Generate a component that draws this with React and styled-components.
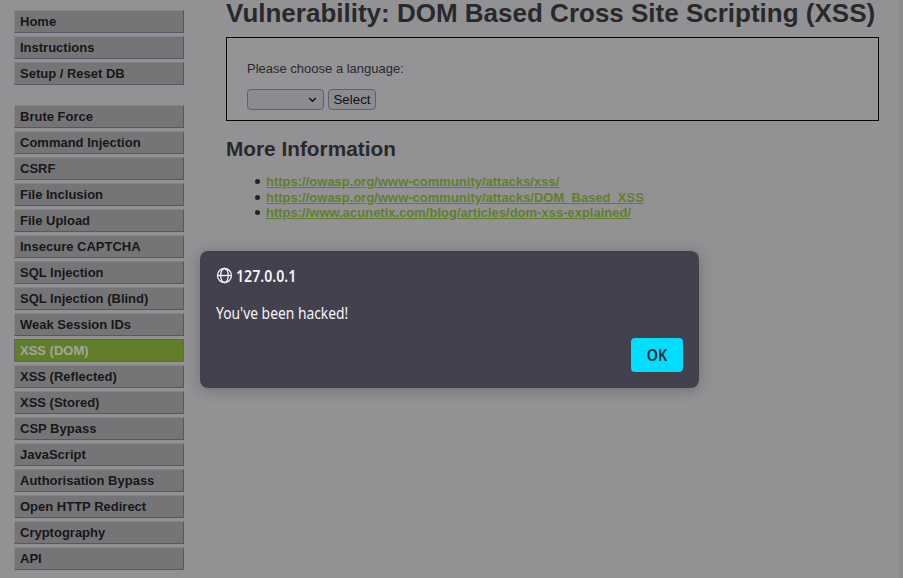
import React from 'react';
import styled, { createGlobalStyle } from 'styled-components';

const GlobalStyle = createGlobalStyle`
  * { box-sizing: border-box; }
  html, body { margin: 0; height: 100%; overflow: hidden; background: #929294; }
`;

const Page = styled.div`
  position: relative;
  display: flex;
  width: 903px;
  height: 578px;
  overflow: hidden;
  background: #929294;
  border-right: 4px solid #8d8d8f;
  color: #29292b;
  font: 13px/15.6px "Liberation Sans", Arial, sans-serif;
`;

const Sidebar = styled.nav`
  display: flex;
  flex-direction: column;
  gap: 20px;
  width: 170px;
  margin: 10px 0 0 14px;
`;

const MenuGroup = styled.ul`
  display: flex;
  flex-direction: column;
  gap: 3px;
  margin: 0;
  padding: 0;
  list-style: none;
`;

const MenuItem = styled.li`
  height: 23px;
  padding: 3px 5px 0;
  border: 1px solid;
  border-color: ${({ $active }) => ($active ? '#5b6270' : '#868688 #555869 #555869 #868688')};
  background: ${({ $active }) => ($active ? '#617f2b' : '#757577')};
  color: ${({ $active }) => ($active ? '#a3a69a' : '#171719')};
  font-weight: bold;
  line-height: 16px;
  cursor: pointer;
`;

const Main = styled.main`
  width: 653px;
  margin-left: 42px;
`;

const Title = styled.h1`
  height: 29px;
  margin: 0 0 8px;
  font-size: 26px;
  line-height: 26px;
  white-space: nowrap;
`;

const Panel = styled.section`
  height: 84px;
  padding: 23px 20px 0;
  border: 1px solid #09090b;
  background: #949496;
`;

const Prompt = styled.p`
  margin: 0 0 12px;
  line-height: 16px;
`;

const Controls = styled.form`
  display: flex;
  gap: 4px;
`;

const controlBorder = '1px solid #615f6d';

const LanguageSelect = styled.div`
  display: flex;
  align-items: center;
  justify-content: flex-end;
  width: 77px;
  height: 21px;
  padding-right: 6px;
  border: ${controlBorder};
  border-radius: 4px;
  background: #8c8b90;
  color: #111113;
`;

const SelectButton = styled.button`
  width: 48px;
  height: 21px;
  padding: 0;
  border: ${controlBorder};
  border-radius: 4px;
  background: #8c8b90;
  color: #111113;
  font: 13.33px/19px "Liberation Sans", Arial, sans-serif;
`;

const Heading = styled.h2`
  margin: 16px 0 13px;
  font-size: 20.8px;
  line-height: 24px;
`;

const LinkList = styled.ul`
  margin: 0;
  padding: 0 0 0 28.5px;
  list-style: none;
`;

const LinkRow = styled.li`
  display: flex;
  align-items: center;
  gap: 6.5px;

  &::before {
    content: '';
    width: 5px;
    height: 5px;
    border-radius: 50%;
    background: #242426;
  }
`;

const Link = styled.a`
  color: #617f2b;
  font-weight: bold;
  text-decoration: underline;
`;

const dialogFont = '"Noto Sans", sans-serif';

const Dialog = styled.div`
  position: absolute;
  top: 251px;
  left: 200px;
  display: flex;
  flex-direction: column;
  width: 499px;
  height: 137px;
  padding: 15px 16px 16px;
  border-radius: 8px;
  background: #43414d;
  color: #f4f3f7;
  box-shadow: 0 2px 14px rgba(30, 30, 36, 0.28);
  font: 15.5px/20px ${dialogFont};
`;

const DialogHeader = styled.header`
  display: flex;
  align-items: center;
  gap: 3px;
  height: 19px;
  font-weight: 600;
`;

const Host = styled.span`
  transform: scaleX(0.913);
  transform-origin: left;
`;

const Message = styled.p`
  margin: 18px 0 15px;
  transform: scaleX(0.893);
  transform-origin: left;
`;

const OkButton = styled.button`
  align-self: flex-end;
  width: 52px;
  height: 34px;
  padding: 0;
  border: 0;
  border-radius: 4px;
  background: #00ddff;
  color: #2b2a33;
  font: 600 15.5px/34px ${dialogFont};
`;

const OkLabel = styled.span`
  display: block;
  height: 34px;
  transform: scaleX(0.92);
`;

const setupItems = ['Home', 'Instructions', 'Setup / Reset DB'];
const lessonItems = [
  'Brute Force', 'Command Injection', 'CSRF', 'File Inclusion', 'File Upload',
  'Insecure CAPTCHA', 'SQL Injection', 'SQL Injection (Blind)', 'Weak Session IDs',
  'XSS (DOM)', 'XSS (Reflected)', 'XSS (Stored)', 'CSP Bypass', 'JavaScript',
  'Authorisation Bypass', 'Open HTTP Redirect', 'Cryptography', 'API',
];
const links = [
  'https://owasp.org/www-community/attacks/xss/',
  'https://owasp.org/www-community/attacks/DOM_Based_XSS',
  'https://www.acunetix.com/blog/articles/dom-xss-explained/',
];

function Menu({ items }) {
  return (
    <MenuGroup>
      {items.map((item) => (
        <MenuItem key={item} $active={item === 'XSS (DOM)'}>{item}</MenuItem>
      ))}
    </MenuGroup>
  );
}

function Globe() {
  return (
    <svg width="17" height="17" viewBox="0 0 17 17" fill="none" stroke="currentColor" strokeWidth="1.3">
      <circle cx="8.5" cy="8.5" r="7" />
      <ellipse cx="8.5" cy="8.5" rx="3.8" ry="7" />
      <path d="M1.5 8.5h14" />
    </svg>
  );
}

export default function App() {
  return (
    <>
      <GlobalStyle />
      <Page>
        <Sidebar>
          <Menu items={setupItems} />
          <Menu items={lessonItems} />
        </Sidebar>
        <Main>
          <Title>Vulnerability: DOM Based Cross Site Scripting (XSS)</Title>
          <Panel>
            <Prompt>Please choose a language:</Prompt>
            <Controls>
              <LanguageSelect>
                <svg width="9" height="6" viewBox="0 0 9 6" fill="none" stroke="currentColor" strokeWidth="1.4">
                  <path d="M1.2 1 4.5 4.3 7.8 1" />
                </svg>
              </LanguageSelect>
              <SelectButton type="button">Select</SelectButton>
            </Controls>
          </Panel>
          <Heading>More Information</Heading>
          <LinkList>
            {links.map((url) => (
              <LinkRow key={url}><Link href={url}>{url}</Link></LinkRow>
            ))}
          </LinkList>
        </Main>
        <Dialog role="alertdialog">
          <DialogHeader>
            <Globe />
            <Host>127.0.0.1</Host>
          </DialogHeader>
          <Message>You've been hacked!</Message>
          <OkButton type="button"><OkLabel>OK</OkLabel></OkButton>
        </Dialog>
      </Page>
    </>
  );
}
